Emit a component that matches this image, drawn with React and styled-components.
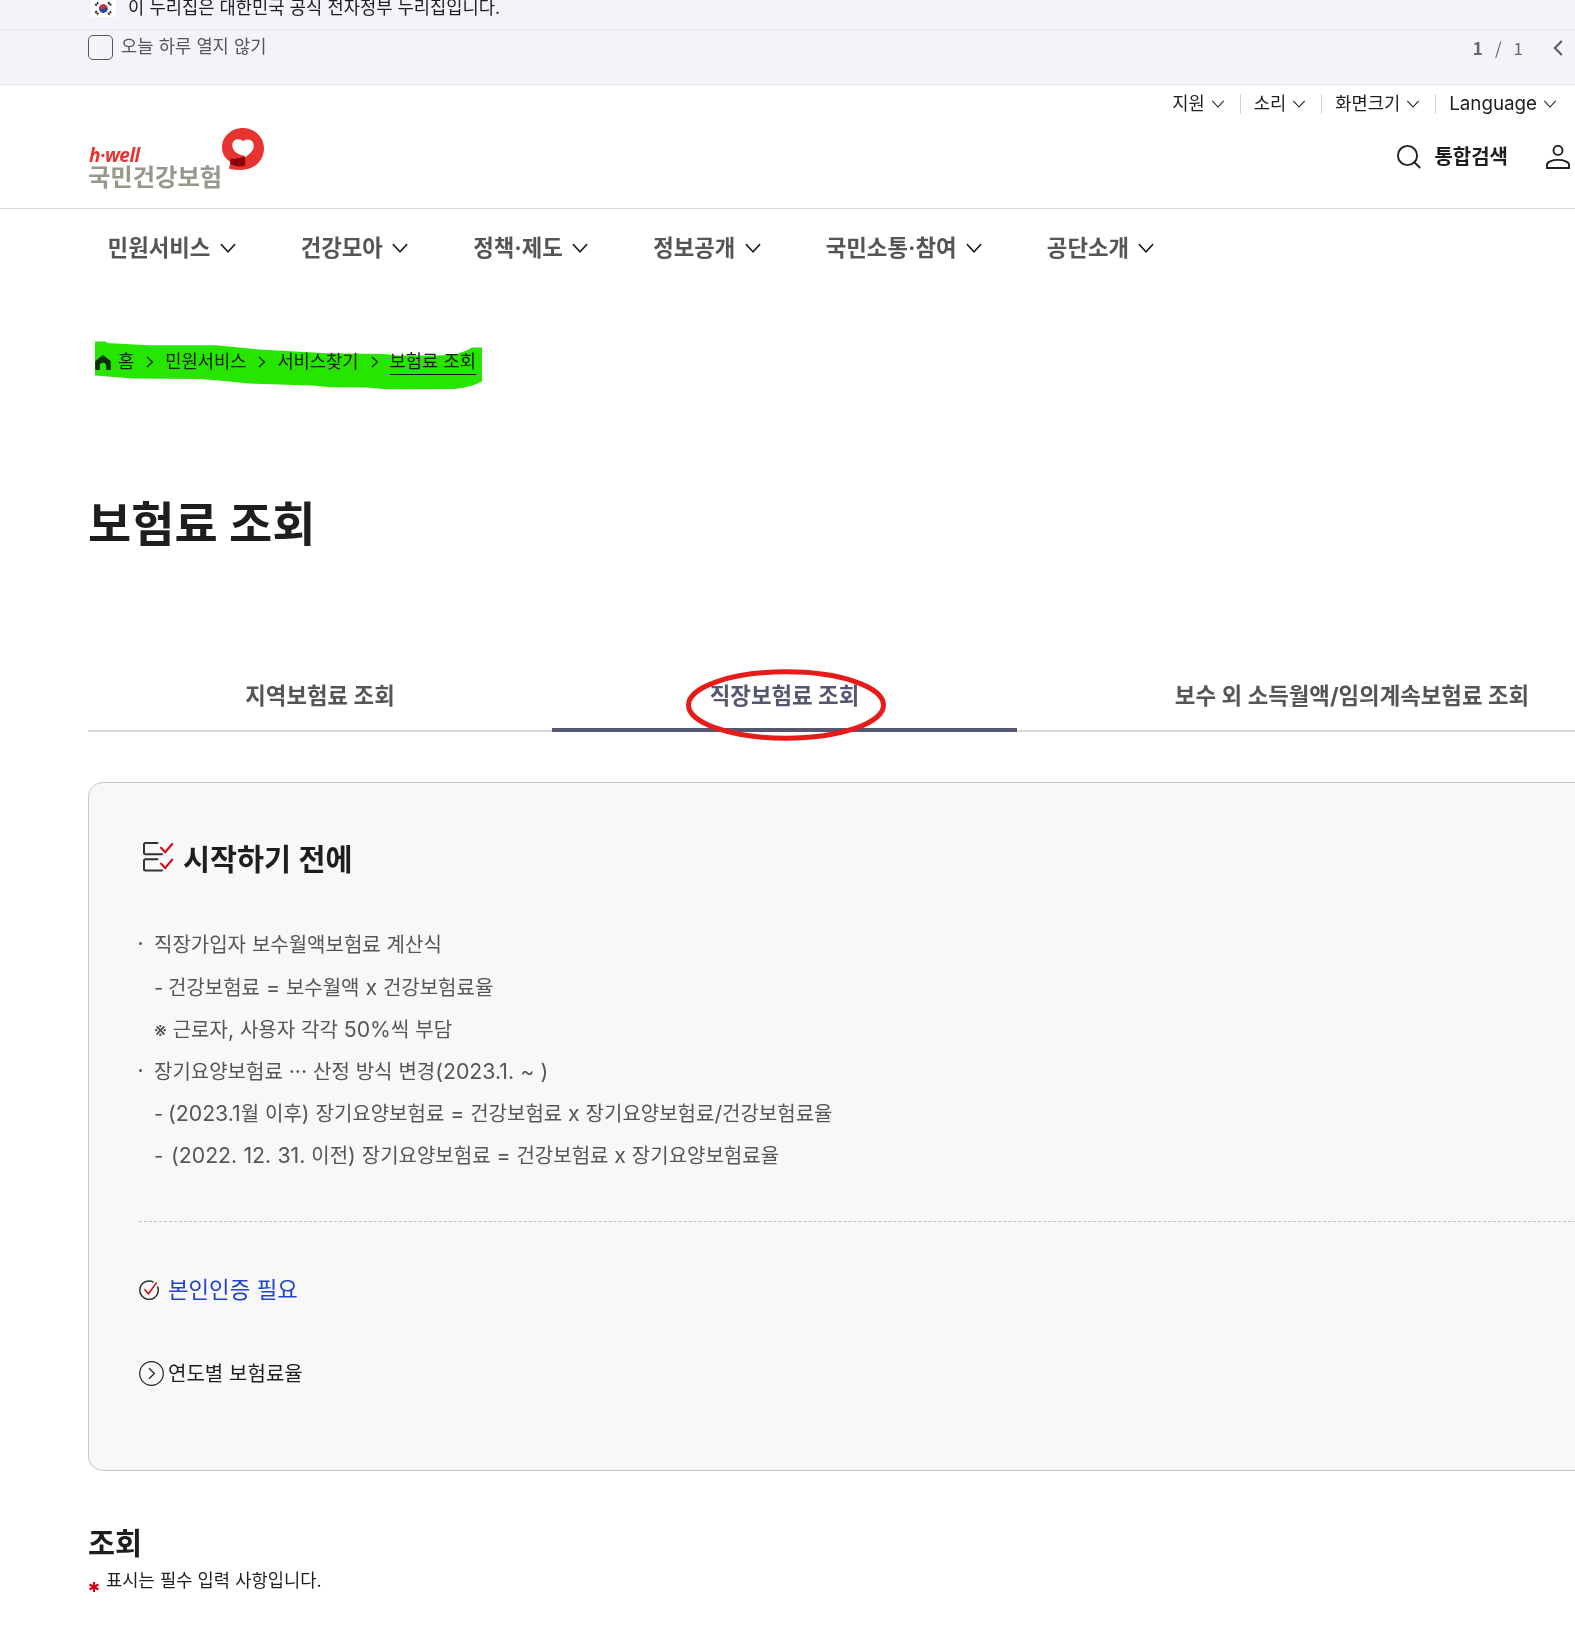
import styled, { createGlobalStyle, css } from 'styled-components';

const MENUS = [
  { label: '민원서비스' },
  { label: '건강모아' },
  { label: '정책·제도' },
  { label: '정보공개' },
  { label: '국민소통·참여' },
  { label: '공단소개' },
];

const UTILS = ['지원', '소리', '화면크기'];

const CRUMBS = ['홈', '민원서비스', '서비스찾기'];

const TABS = [
  { label: '지역보험료 조회', width: 464 },
  { label: '직장보험료 조회', width: 465, active: true },
  { label: '보수 외 소득월액/임의계속보험료 조회', width: 670 },
];

const ChevronDown = ({ size, stroke }) => (
  <svg width={size} height={size} viewBox="0 0 20 20" fill="none">
    <path d="M2.9 6.1L10 13.8l7.1-7.7" stroke="#1e2124" strokeWidth={stroke} />
  </svg>
);

const CrumbArrow = () => (
  <svg width="12" height="12" viewBox="0 0 12 12" fill="none">
    <path d="M3 1l5.4 5L3 11" stroke="#1e2124" strokeWidth="1.2" />
  </svg>
);

const FlagIcon = () => (
  <svg width="25" height="17" viewBox="0 0 25 17">
    <rect width="25" height="17" fill="#fff" />
    <path d="M8.6 6.2a4.4 4.4 0 0 1 7.6 4.6z" fill="#d0313c" />
    <path d="M8.6 6.2a4.4 4.4 0 0 0 7.6 4.6z" fill="#1c4a9e" />
    <circle cx="10.5" cy="7.4" r="2.1" fill="#d0313c" />
    <circle cx="14.3" cy="9.6" r="2.1" fill="#1c4a9e" />
    <g stroke="#222" strokeWidth="2.2" strokeDasharray="1.7 .5">
      <path d="M4.4 5.4l3-3" />
      <path d="M17.2 2.4l3 3" />
      <path d="M4.4 11.4l3 3" />
      <path d="M17.2 14.4l3-3" />
    </g>
  </svg>
);

const BubbleMark = () => (
  <svg width="42" height="43" viewBox="0 0 42 43">
    <path
      d="M21 0C32.600 0 42 9 42 20.500S33 42 19 42q-6 0-12-1.300L8.300 34C3 30.500 0 25.500 0 19.500 0 8.500 9.400 0 21 0z"
      fill="#e83430"
    />
    <path d="M8.600 30q6 2.500 14.600-2.300V37.500Q15 40 8 35.800z" fill="#8e0008" />
    <path
      d="M21 13.600c1.600-2.700 9-3.500 10.600 2.400 1.200 5.500-3.400 9.800-8.600 13.500l-.8-1.700C16 26.800 10.400 23.500 10.300 17.300c.1-6.800 8.600-7.500 10.700-3.700z"
      fill="#fff"
    />
  </svg>
);

const SearchIcon = () => (
  <svg width="26" height="26" viewBox="0 0 26 26" fill="none" stroke="#1e2124" strokeWidth="1.9">
    <circle cx="11.500" cy="11.500" r="9.600" />
    <path d="M18.300 18.300l5.900 5.700" />
  </svg>
);

const UserIcon = () => (
  <svg width="24" height="24" viewBox="0 0 24 24" fill="none" stroke="#1e2124" strokeWidth="1.9">
    <circle cx="12" cy="5.400" r="4.500" />
    <path d="M1 23v-3.500c0-2.500 5-4.600 11-4.600s11 2.100 11 4.600V23z" />
  </svg>
);

const HomeIcon = () => (
  <svg width="16" height="15" viewBox="0 0 16 15">
    <path
      d="M7.200.400a1.300 1.300 0 0 1 1.600 0l6.500 5.300q.5.400.5 1.100V14q0 1-1 1h-3.600V11a3.200 3.200 0 0 0-6.400 0v4H1.200q-1 0-1-1V6.800q0-.7.500-1.100z"
      fill="#333"
    />
  </svg>
);

const ChecklistIcon = () => (
  <svg width="32" height="32" viewBox="0 0 32 32" fill="none" strokeWidth="2" strokeLinecap="round">
    <path d="M15.500 2H3.500Q2 2 2 3.500v8.300q0 1.500 1.500 1.500H20" stroke="#333" />
    <path d="M15.500 18.200H3.500q-1.500 0-1.500 1.500v8.300q0 1.500 1.500 1.500H20" stroke="#333" />
    <path d="M19 6.800l4.200 4.400L30.200 3" stroke="#d50010" />
    <path d="M19 22.600l4.200 4.400 7-8.400" stroke="#d50010" />
  </svg>
);

const CertIcon = () => (
  <svg width="20" height="20" viewBox="0 0 20 20" fill="none" strokeWidth="1.500">
    <path d="M14.600 2.200A9.200 9.200 0 1 0 18.500 6.600" stroke="#333" />
    <path d="M5.500 9.200l4 4.600L17.800 2.400" stroke="#d50010" />
  </svg>
);

const GoIcon = () => (
  <svg width="25" height="25" viewBox="0 0 25 25" fill="none" stroke="#1e2124" strokeWidth="1.200">
    <circle cx="12.500" cy="12.500" r="11.800" />
    <path d="M10 7.300l5.400 5.200-5.400 5.200" />
  </svg>
);

const RequiredMark = () => (
  <svg width="10" height="10" viewBox="0 0 10 10" stroke="#d50010" strokeWidth="2.100">
    <path d="M5 0v10M.600 2.500l8.800 5M9.400 2.500l-8.800 5" />
  </svg>
);

const App = () => {
  return (
    <Page>
      <GlobalStyle />
      <GovBanner>
        <FlagIcon />
        <Text>이 누리집은 대한민국 공식 전자정부 누리집입니다.</Text>
      </GovBanner>
      <NoticeBar>
        <CheckLabel>
          <CheckBox />
          <Text $color="#555">오늘 하루 열지 않기</Text>
        </CheckLabel>
        <Pager>
          <b>1</b>
          <span>/</span>
          <span>1</span>
          <svg width="10" height="16" viewBox="0 0 10 16" fill="none">
            <path d="M8.800 1L1.800 8l7 7" stroke="#555" strokeWidth="1.900" />
          </svg>
        </Pager>
      </NoticeBar>

      <Header>
        <UtilMenu>
          {UTILS.map((label) => (
            <UtilItem key={label}>
              <Text>{label}</Text>
              <ChevronDown size={16} stroke={1.4} />
            </UtilItem>
          ))}
          <UtilItem>
            <Text>
              <En>Language</En>
            </Text>
            <ChevronDown size={16} stroke={1.4} />
          </UtilItem>
        </UtilMenu>
        <HeaderMain>
          <Logo>
            <LogoWords>
              <LogoEn>h·well</LogoEn>
              <LogoKo>국민건강보험</LogoKo>
            </LogoWords>
            <BubbleMark />
          </Logo>
          <HeaderActions>
            <SearchIcon />
            <Text $size={20} $bold>
              통합검색
            </Text>
            <UserIcon />
          </HeaderActions>
        </HeaderMain>
      </Header>

      <MainMenu>
        {MENUS.map(({ label }) => (
          <MenuItem key={label}>
            <Text $size={22.35} $bold $color="#555">
              {label}
            </Text>
            <ChevronDown size={20} stroke={1.6} />
          </MenuItem>
        ))}
      </MainMenu>

      <Breadcrumb>
        <HomeIcon />
        {CRUMBS.map((label) => (
          <Crumb key={label}>
            <Text>{label}</Text>
            <CrumbArrow />
          </Crumb>
        ))}
        <CurrentCrumb>보험료 조회</CurrentCrumb>
        <Highlight width="387" height="50" viewBox="0 0 387 50">
          <path
            d="M0 .5H11l1 1.500 41 2.200h68l18 1.700 25 2.700 36 2 32 1.700 57 .600 14 1.700h39q14-.200 22-2.300 8-2.500 13-5.700h10v33.700q-10 6-27 7.700l-68 .300-21-1.700-36-.300-18-1.700-64-2-18-2-29-2.700-68-.300L0 34.500z"
            fill="#26e600"
          />
        </Highlight>
      </Breadcrumb>

      <Content>
        <PageTitle>보험료 조회</PageTitle>
        <TabList>
          {TABS.map(({ label, width, active }) => (
            <Tab key={label} $width={width} $active={active}>
              {label}
              {active && (
                <CircleMark width="200" height="72" viewBox="0 0 200 72">
                  <ellipse cx="100" cy="36" rx="97.500" ry="33.200" fill="none" stroke="#e81b1b" strokeWidth="5" />
                </CircleMark>
              )}
            </Tab>
          ))}
        </TabList>

        <GuideBox>
          <GuideTitle>
            <ChecklistIcon />
            시작하기 전에
          </GuideTitle>
          <GuideList>
            <GuideLine $bullet>직장가입자 보수월액보험료 계산식</GuideLine>
            <GuideLine>
              <Dash>-</Dash>건강보험료 <En>=</En> 보수월액 <En>x</En> 건강보험료율
            </GuideLine>
            <GuideLine>
              ※ 근로자<En>,</En> 사용자 각각 <En>50%</En>씩 부담
            </GuideLine>
            <GuideLine $bullet>
              장기요양보험료 <En>···</En> 산정 방식 변경<En>(2023.1. ~ )</En>
            </GuideLine>
            <GuideLine>
              <Dash>-</Dash>
              <En>(2023.1</En>월 이후<En>)</En> 장기요양보험료 <En>=</En> 건강보험료 <En>x</En> 장기요양보험료
              <En>/</En>건강보험료율
            </GuideLine>
            <GuideLine>
              <Dash $wide>-</Dash>
              <En>(2022. 12. 31.</En> 이전<En>)</En> 장기요양보험료 <En>=</En> 건강보험료 <En>x</En> 장기요양보험료율
            </GuideLine>
          </GuideList>
          <Divider />
          <CertRow>
            <CertIcon />
            <Text $size={22.35} $color="#2144c4">
              본인인증 필요
            </Text>
          </CertRow>
          <RateLink>
            <GoIcon />
            <Text $size={20}>연도별 보험료율</Text>
          </RateLink>
        </GuideBox>

        <SectionTitle>조회</SectionTitle>
        <RequiredNote>
          <RequiredMark />
          <Text>표시는 필수 입력 사항입니다.</Text>
        </RequiredNote>
      </Content>
    </Page>
  );
};

const GlobalStyle = createGlobalStyle`
  * {
    box-sizing: border-box;
  }

  body {
    margin: 0;
    background-color: #fff;
    color: #1e1e1e;
    font-family: Inter, 'Noto Sans CJK KR', sans-serif;
    word-spacing: 0.017em;
  }

  svg {
    display: block;
    flex-shrink: 0;
  }
`;

const Page = styled.div`
  width: 100%;
  height: 1631px;
  overflow: hidden;
`;

const Text = styled.span`
  font-size: ${({ $size }) => $size || 17.65}px;
  font-weight: ${({ $bold }) => ($bold ? 700 : 400)};
  color: ${({ $color }) => $color || '#1e1e1e'};
  line-height: 24px;
  white-space: nowrap;
`;

/* Latin letters and digits run a little larger than the Hangul */
const En = styled.span`
  font-size: 1.064em;
`;

const GovBanner = styled.div`
  height: 30px;
  padding: 0 0 13px 91px;
  display: flex;
  align-items: center;
  gap: 12px;
  background-color: #f3f4fa;
  border-bottom: 1px solid #e4e5ee;
`;

const NoticeBar = styled.div`
  height: 55px;
  padding: 5px 12px 0 88px;
  display: flex;
  justify-content: space-between;
  align-items: flex-start;
  background-color: #f3f4fa;
  border-bottom: 1px solid #dfe1ee;
`;

const CheckLabel = styled.label`
  display: flex;
  gap: 8px;
`;

const CheckBox = styled.span`
  width: 25px;
  height: 25px;
  border: 1px solid #555;
  border-radius: 5px;
`;

const Pager = styled.div`
  height: 26px;
  display: flex;
  align-items: center;
  font-family: 'Noto Sans CJK KR', sans-serif;
  font-size: 17px;
  line-height: 26px;
  color: #666;

  span {
    margin-left: 12px;
  }

  svg {
    margin-left: 30px;
  }
`;

const Header = styled.header`
  height: 124px;
  border-bottom: 1px solid #d8d8d8;
`;

const UtilMenu = styled.div`
  height: 38px;
  padding-right: 17px;
  display: flex;
  justify-content: flex-end;
  align-items: center;
`;

const UtilItem = styled.div`
  height: 20px;
  display: flex;
  align-items: center;
  gap: 5px;

  & + & {
    margin-left: 14px;
    padding-left: 13px;
    border-left: 1px solid #d0d0d0;
  }
`;

const HeaderMain = styled.div`
  padding: 5px 5px 0 88px;
  display: flex;
  justify-content: space-between;
  align-items: flex-start;
`;

const Logo = styled.div`
  display: flex;
`;

const LogoWords = styled.div`
  width: 134px;
  padding-top: 17px;
  display: flex;
  flex-direction: column;
`;

const LogoEn = styled.span`
  padding-left: 1px;
  font-family: 'Open Sans', sans-serif;
  font-size: 19px;
  font-style: italic;
  font-weight: 700;
  line-height: 20px;
  letter-spacing: -0.5px;
  color: #e83430;
`;

const LogoKo = styled.span`
  font-size: 24.3px;
  font-weight: 700;
  line-height: 24px;
  color: #98978a;
  white-space: nowrap;
`;

const HeaderActions = styled.div`
  padding-top: 16px;
  display: flex;
  align-items: center;

  ${Text} {
    margin: 0 38px 0 12px;
  }
`;

const MainMenu = styled.nav`
  height: 77px;
  padding: 0 0 0 107.6px;
  display: flex;
  align-items: center;
  gap: 63px;
`;

const MenuItem = styled.div`
  display: flex;
  align-items: center;
  gap: 7.3px;
`;

const Breadcrumb = styled.div`
  position: relative;
  height: 30px;
  margin: 61px 0 0 95px;
  display: flex;
  align-items: center;
`;

const Crumb = styled.div`
  margin-left: 7px;
  display: flex;
  align-items: center;
  gap: 10px;

  & + & {
    margin-left: 9px;
  }
`;

const CurrentCrumb = styled.strong`
  margin-left: 9px;
  border-bottom: 1px solid #1e1e1e;
  font-size: 17.65px;
  font-weight: 400;
  line-height: 24px;
`;

/* marker pen stroke over the breadcrumb */
const Highlight = styled.svg`
  position: absolute;
  left: 0;
  top: -6px;
  mix-blend-mode: multiply;
`;

const Content = styled.main`
  padding-left: 88px;
`;

const PageTitle = styled.h1`
  margin: 117px 0 0;
  font-size: 47px;
  font-weight: 700;
  line-height: 60px;
`;

const TabList = styled.div`
  width: 1599px;
  height: 72px;
  margin-top: 106px;
  display: flex;
`;

const Tab = styled.div`
  position: relative;
  width: ${({ $width }) => $width}px;
  height: 72px;
  border-bottom: 2px solid #d8d8d8;
  font-size: 22.35px;
  font-weight: 700;
  line-height: 71px;
  text-align: center;
  color: #555;

  ${({ $active }) =>
    $active &&
    css`
      border-bottom: 4px solid #555770;
      color: #555770;
    `}
`;

const CircleMark = styled.svg`
  position: absolute;
  left: 134px;
  top: 9px;
`;

const GuideBox = styled.section`
  width: 1599px;
  height: 689px;
  margin-top: 50px;
  padding: 50px 50px 0;
  border: 1px solid #c6c6c6;
  border-radius: 15px;
  background-color: #f8f8f8;
`;

const GuideTitle = styled.h2`
  height: 48px;
  margin: 0;
  padding-left: 3px;
  display: flex;
  align-items: center;
  gap: 9px;
  font-size: 29.4px;
  font-weight: 700;
`;

const GuideList = styled.div`
  margin-top: 43px;
`;

const GuideLine = styled.p`
  height: 42px;
  margin: 0;
  padding-left: 15px;
  font-size: 20px;
  line-height: 42px;
  color: #555;
  white-space: nowrap;

  ${({ $bullet }) =>
    $bullet &&
    css`
      padding-left: 0;

      &::before {
        content: '';
        display: inline-block;
        width: 3px;
        height: 3px;
        margin-right: 12px;
        border-radius: 50%;
        background-color: #555;
        vertical-align: 7px;
      }
    `}
`;

const Dash = styled.span`
  display: inline-block;
  width: ${({ $wide }) => ($wide ? 17 : 14)}px;
`;

const Divider = styled.hr`
  margin: 45px 0 0;
  border: 0;
  border-top: 1px dashed #c0c0c0;
`;

const CertRow = styled.div`
  height: 24px;
  margin-top: 56px;
  display: flex;
  align-items: center;
  gap: 9px;
`;

const RateLink = styled.div`
  height: 25px;
  margin-top: 59px;
  display: flex;
  align-items: center;
  gap: 4px;
`;

const SectionTitle = styled.h2`
  margin: 53px 0 0;
  font-size: 29.4px;
  font-weight: 700;
  line-height: 40px;
`;

const RequiredNote = styled.p`
  height: 24px;
  margin: 5px 0 0;
  padding-left: 1px;
  display: flex;
  align-items: center;
  gap: 7px;

  svg {
    margin-top: 11px;
  }
`;

export default App;
